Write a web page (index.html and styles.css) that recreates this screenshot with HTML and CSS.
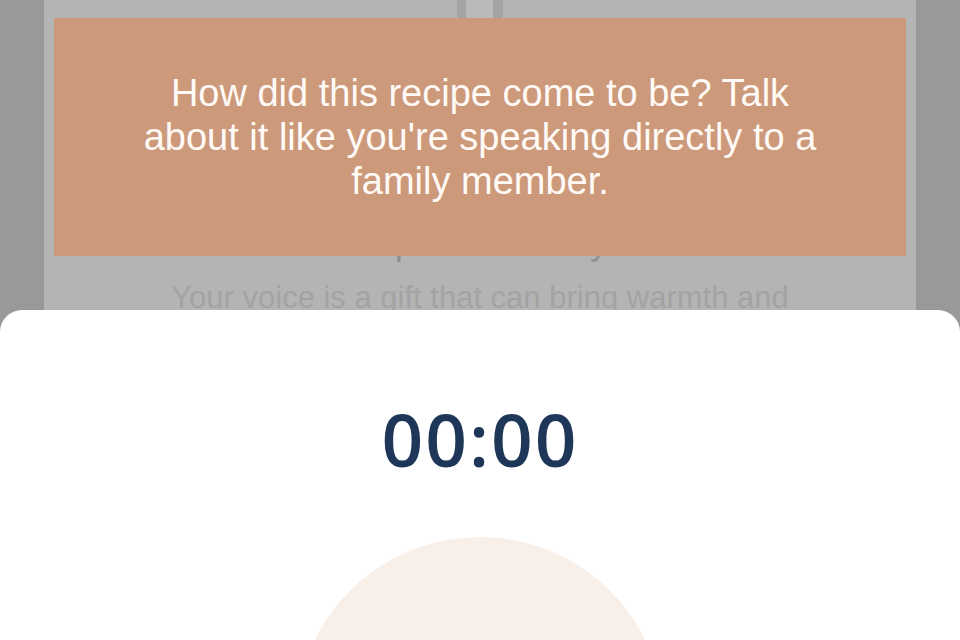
FILE: index.html
```html
<!DOCTYPE html>
<html lang="en">
<head>
<meta charset="utf-8">
<title>Record your recipe story</title>
<link rel="stylesheet" href="styles.css">
</head>
<body>
<div class="screen">
  <div class="card">
    <div class="hero-bar"></div>
    <h1 class="title">Your personal story</h1>
    <p class="subtitle">Your voice is a gift that can bring warmth and</p>
  </div>

  <div class="tooltip">
    <p class="tooltip-text">How did this recipe come to be? Talk about it like you're speaking directly to a family member.</p>
  </div>

  <div class="sheet">
    <div class="timer">00:00</div>
    <div class="record-circle"></div>
  </div>
</div>
</body>
</html>
```

FILE: styles.css
```css
html, body {
  margin: 0;
  padding: 0;
  height: 100%;
}

body {
  background: #999999;
  overflow: hidden;
  font-family: "Liberation Sans", Arial, sans-serif;
}

.screen {
  position: relative;
  width: 960px;
  height: 640px;
  overflow: hidden;
}

.card {
  margin: 0 44px;
  height: 100%;
  background: #b4b4b4;
  display: flex;
  flex-direction: column;
  align-items: center;
}

.hero-bar {
  width: 27px;
  height: 60px;
  border-left: 9px solid #a3a3a3;
  border-right: 10px solid #a3a3a3;
  background: #bababa;
  flex: none;
}

.title {
  margin: 160px 0 0 -36px;
  font-size: 36px;
  line-height: 44px;
  font-weight: 400;
  color: #8f8f8f;
  letter-spacing: -1px;
}

.subtitle {
  margin: 16px 0 0;
  font-size: 31px;
  line-height: 36px;
  color: #a3a3a3;
  white-space: nowrap;
}

.tooltip {
  position: absolute;
  top: 18px;
  left: 54px;
  right: 54px;
  height: 238px;
  background: #cc997b;
  display: flex;
  align-items: center;
  justify-content: center;
  padding: 0 78px;
  box-sizing: border-box;
}

.tooltip-text {
  margin: 0;
  color: #fffaf6;
  font-size: 38px;
  line-height: 44px;
  text-align: center;
}

.sheet {
  position: absolute;
  top: 310px;
  left: 0;
  right: 0;
  bottom: 0;
  background: #ffffff;
  border-radius: 22px 22px 0 0;
  display: flex;
  flex-direction: column;
  align-items: center;
  padding-top: 92px;
  box-sizing: border-box;
}

.timer {
  font-family: "Open Sans", sans-serif;
  font-weight: 600;
  font-size: 73px;
  line-height: 73px;
  letter-spacing: 2px;
  color: #1e3658;
}

.record-circle {
  margin-top: 62px;
  width: 368px;
  height: 368px;
  border-radius: 50%;
  background: #f9efe9;
  flex: none;
}
```
